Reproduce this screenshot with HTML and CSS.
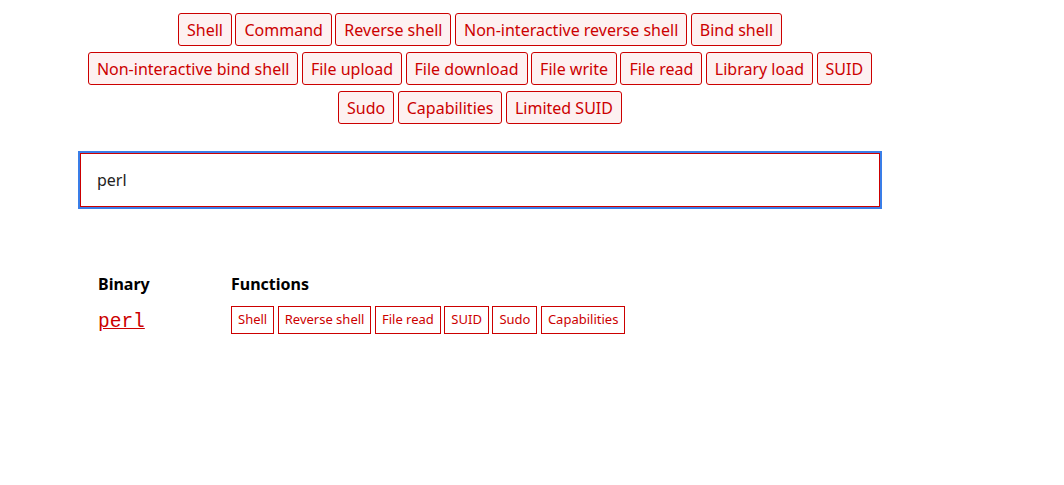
FILE: index.html
```html
<!DOCTYPE html>
<html>
<head>
<meta charset="utf-8">
<link rel="stylesheet" href="styles.css">
</head>
<body>
<div class="page">
  <div class="filters">
    <button class="filter">Shell</button>
    <button class="filter">Command</button>
    <button class="filter">Reverse shell</button>
    <button class="filter">Non-interactive reverse shell</button>
    <button class="filter">Bind shell</button>
    <button class="filter">Non-interactive bind shell</button>
    <button class="filter">File upload</button>
    <button class="filter">File download</button>
    <button class="filter">File write</button>
    <button class="filter">File read</button>
    <button class="filter">Library load</button>
    <button class="filter">SUID</button>
    <button class="filter">Sudo</button>
    <button class="filter">Capabilities</button>
    <button class="filter">Limited SUID</button>
  </div>
  <div class="search">
    <input class="search-input" type="text" value="perl">
  </div>
  <div class="results">
    <div class="head">Binary</div>
    <div class="head">Functions</div>
    <div class="bin"><a href="#" class="bin-link">perl</a></div>
    <div class="funcs">
      <a href="#" class="tag">Shell</a>
      <a href="#" class="tag">Reverse shell</a>
      <a href="#" class="tag">File read</a>
      <a href="#" class="tag">SUID</a>
      <a href="#" class="tag">Sudo</a>
      <a href="#" class="tag">Capabilities</a>
    </div>
  </div>
</div>
</body>
</html>
```

FILE: styles.css
```css
html, body {
  margin: 0;
  padding: 0;
  background: #fff;
}
body {
  font-family: "Noto Sans", "Open Sans", sans-serif;
  font-size: 16px;
  color: #000;
}
.page {
  width: 800px;
  margin-left: 80px;
  padding-top: 13px;
}
.filters {
  display: flex;
  flex-wrap: wrap;
  justify-content: center;
  gap: 6px 3.5px;
}
.filter {
  font-family: "Noto Sans", "Open Sans", sans-serif;
  font-size: 16px;
  line-height: 21px;
  padding: 6px 8px 4px;
  color: #c00;
  background: #fdf1f1;
  border: 1px solid #c00;
  border-radius: 3px;
  margin: 0;
}
.search {
  margin-top: 29px;
}
.search-input {
  box-sizing: border-box;
  width: 800px;
  height: 54px;
  margin: 0;
  padding: 0 16px;
  border: 1px solid #c00;
  outline: 2px solid #3a7ee8;
  font-family: "Noto Sans", "Open Sans", sans-serif;
  font-size: 16px;
  color: #222;
  background: #fff;
}
.results {
  margin-top: 65px;
  padding-left: 18px;
  display: grid;
  grid-template-columns: 133px 1fr;
  row-gap: 10px;
}
.head {
  font-weight: bold;
  font-size: 16px;
  line-height: 24px;
}
.bin {
  padding-top: 4px;
}
.bin-link {
  font-family: "Liberation Mono", "DejaVu Sans Mono", monospace;
  font-size: 19.5px;
  line-height: 24px;
  color: #c00;
  text-decoration: underline;
}
.funcs {
  display: flex;
  flex-wrap: wrap;
  gap: 4px 3.5px;
}
.tag {
  font-size: 13px;
  line-height: 18px;
  padding: 3px 6px;
  border: 1px solid #c00;
  color: #c00;
  text-decoration: none;
  background: #fff;
}
```
